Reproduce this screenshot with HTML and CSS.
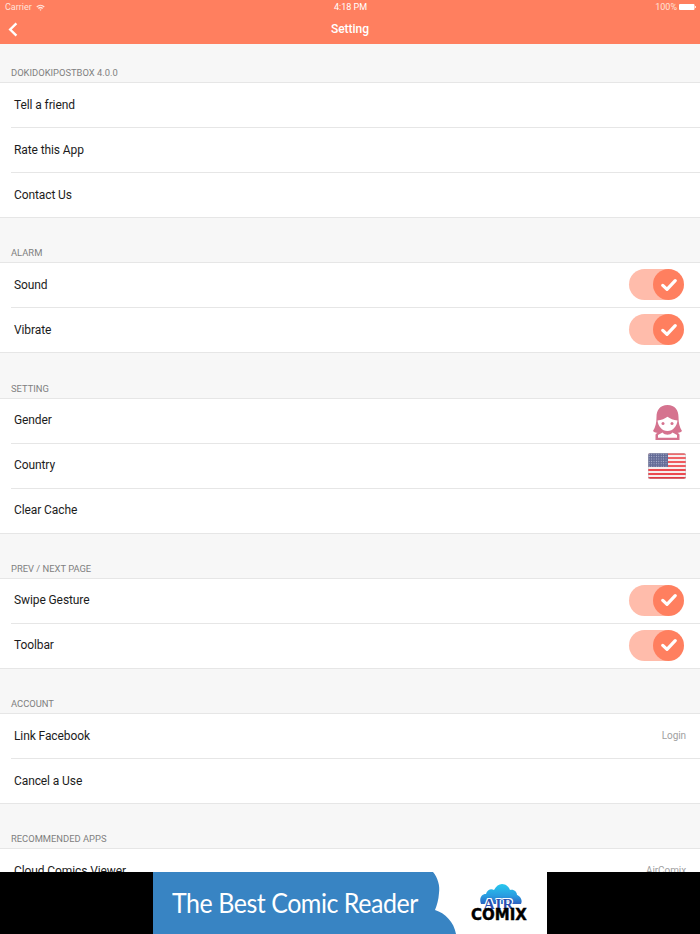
FILE: index.html
```html
<!DOCTYPE html>
<html>
<head>
   <meta charset="UTF-8">
   <title>Setting</title>
   <link rel="stylesheet" href="styles.css">
</head>
<body>
	<svg class="defs" width="0" height="0">
		<symbol id="check" viewBox="0 0 16 14">
			<path d="M1.800 7.400 L6 11.400 L14.200 2.600" fill="none" stroke="#fff" stroke-width="3.200" stroke-linecap="round" stroke-linejoin="round"/>
		</symbol>
	</svg>

	<div class="screen">
		<div class="topbar">
			<div class="status">
				<div class="status_left">
					Carrier
					<svg class="wifi" width="9" height="7" viewBox="0 0 11 8">
						<path d="M0.400 2.700 A7.400 7.400 0 0 1 10.600 2.700 L9.500 3.900 A5.800 5.800 0 0 0 1.500 3.900 Z M2.300 4.700 A4.600 4.600 0 0 1 8.700 4.700 L7.600 5.800 A3 3 0 0 0 3.400 5.800 Z M4.200 6.600 A1.900 1.900 0 0 1 6.800 6.600 L5.500 8 Z" fill="#ffe3da"/>
					</svg>
				</div>
				<div class="status_time">4:18 PM</div>
				<div class="status_right">
					100%
					<svg width="17" height="6" viewBox="0 0 17 6">
						<rect x="0" y="0" width="15.500" height="6" rx="1" fill="#fff"/>
						<rect x="15.900" y="2" width="1.100" height="2" fill="#ffe3da"/>
					</svg>
				</div>
			</div>
			<div class="nav">
				<svg class="back" width="10" height="15" viewBox="0 0 10 15">
					<path d="M8.400 1.400 L2.200 7.500 L8.400 13.600" fill="none" stroke="#fff" stroke-width="2.400"/>
				</svg>
				<div class="nav_title">Setting</div>
			</div>
		</div>

		<div class="content">
			<div class="sec_title">DOKIDOKIPOSTBOX 4.0.0</div>
			<div class="group">
				<div class="row"><span>Tell a friend</span></div>
				<div class="row"><span>Rate this App</span></div>
				<div class="row"><span>Contact Us</span></div>
			</div>

			<div class="sec_title">ALARM</div>
			<div class="group">
				<div class="row">
					<span>Sound</span>
					<div class="toggle"><div class="knob"><svg width="16" height="14"><use href="#check"/></svg></div></div>
				</div>
				<div class="row">
					<span>Vibrate</span>
					<div class="toggle"><div class="knob"><svg width="16" height="14"><use href="#check"/></svg></div></div>
				</div>
			</div>

			<div class="sec_title">SETTING</div>
			<div class="group">
				<div class="row">
					<span>Gender</span>
					<svg class="girl" width="29" height="35" viewBox="0 0 29 35">
						<path d="M14.500 0 C7 0 3.500 5 3.500 12 C3.500 18 2.500 22 0 26 C1.500 27.500 3 28 4.500 27.500 L2.500 29.500 L2.500 35 L26.500 35 L26.500 29.500 L24.500 27.500 C26 28 27.500 27.500 29 26 C26.500 22 25.500 18 25.500 12 C25.500 5 22 0 14.500 0 Z" fill="#d5738f"/>
						<path d="M4.500 15.500 C8.500 15 12 13.800 14.500 11.800 C17 13.800 20.500 15 24.500 15.500 C24 21 20 26 14.500 26 C9 26 5 21 4.500 15.500 Z" fill="#fff"/>
						<circle cx="10" cy="18.500" r="1.500" fill="#d5738f"/>
						<circle cx="19" cy="18.500" r="1.500" fill="#d5738f"/>
						<path d="M5 32.800 L5 30 L9.500 27.500 C12 30.500 17 30.500 19.500 27.500 L24 30 L24 32.800 Z" fill="#fff"/>
					</svg>
				</div>
				<div class="row">
					<span>Country</span>
					<svg class="flag" width="38" height="26" viewBox="0 0 38 26">
						<defs>
							<pattern id="stars" width="2.400" height="2.400" patternUnits="userSpaceOnUse">
								<circle cx="1.200" cy="1.200" r="0.550" fill="#b9bed6"/>
							</pattern>
							<clipPath id="flag_clip"><rect x="0" y="0" width="38" height="26" rx="2.500"/></clipPath>
						</defs>
						<g clip-path="url(#flag_clip)">
							<rect width="38" height="26" fill="#f6eeee"/>
							<rect y="0" width="38" height="2" fill="#ef6a6c"/>
							<rect y="4" width="38" height="2" fill="#ef6266"/>
							<rect y="8" width="38" height="2" fill="#ef5a5e"/>
							<rect y="12" width="38" height="2" fill="#ef5a5e"/>
							<rect y="16" width="38" height="2" fill="#ec4a50"/>
							<rect y="20" width="38" height="2" fill="#ec4a50"/>
							<rect y="24" width="38" height="2" fill="#e23a42"/>
							<rect width="20" height="14" fill="#636b96"/>
							<rect width="20" height="14" fill="url(#stars)"/>
						</g>
						<rect x="0.250" y="0.250" width="37.500" height="25.500" rx="2.500" fill="none" stroke="#b8b8c0" stroke-width="0.500"/>
					</svg>
				</div>
				<div class="row"><span>Clear Cache</span></div>
			</div>

			<div class="sec_title">PREV / NEXT PAGE</div>
			<div class="group">
				<div class="row">
					<span>Swipe Gesture</span>
					<div class="toggle"><div class="knob"><svg width="16" height="14"><use href="#check"/></svg></div></div>
				</div>
				<div class="row">
					<span>Toolbar</span>
					<div class="toggle"><div class="knob"><svg width="16" height="14"><use href="#check"/></svg></div></div>
				</div>
			</div>

			<div class="sec_title">ACCOUNT</div>
			<div class="group">
				<div class="row">
					<span>Link Facebook</span>
					<span class="row_value">Login</span>
				</div>
				<div class="row"><span>Cancel a Use</span></div>
			</div>

			<div class="sec_title">RECOMMENDED APPS</div>
			<div class="group">
				<div class="row">
					<span>Cloud Comics Viewer</span>
					<span class="row_value">AirComix</span>
				</div>
			</div>
		</div>

		<div class="ad">
			<div class="banner">
				<div class="banner_blue"><span class="banner_text">The Best Comic Reader</span></div>
				<svg class="banner_edge" width="24" height="62" viewBox="0 0 24 62">
					<path d="M0 0 C5 6 7 14 6 21 C5.500 28 4 33 2 38 C12 41 21 50 23 62 L0 62 Z" fill="#3884c3"/>
				</svg>
				<div class="logo">
					<svg class="cloud" width="42" height="20" viewBox="0 0 42 20">
						<defs>
							<linearGradient id="cloud_fill" x1="0" y1="0" x2="0" y2="1">
								<stop offset="0" stop-color="#27c8ee"/>
								<stop offset="0.600" stop-color="#2a9be0"/>
								<stop offset="1" stop-color="#2b62c0"/>
							</linearGradient>
						</defs>
						<path d="M1 20 C-1 15 1 10 6 10 C7 6 11 4 14 6 C16 2 19 0 22 0 C26 0 29 3 30 6 C34 5 37 8 37 11 C40 12 43 16 41 20 Z" fill="url(#cloud_fill)"/>
					</svg>
					<div class="logo_air">AIR</div>
					<div class="logo_comix">COMIX</div>
				</div>
			</div>
		</div>
	</div>
</body>
</html>
```

FILE: styles.css
```css
html, body{
	margin: 0;
	padding: 0;
}
body{
	font-family: "Roboto", "Liberation Sans", sans-serif;
	color: #1c1c1c;
}
.defs{
	display: block;
	height: 0;
}
.screen{
	width: 700px;
	height: 934px;
	display: flex;
	flex-direction: column;
	overflow: hidden;
	background: #f7f7f7;
}

/* top */
.topbar{
	height: 44px;
	flex: none;
	background: #ff7f5f;
	color: #fff;
}
.status{
	height: 14px;
	padding: 0 4px 0 5px;
	display: grid;
	grid-template-columns: 1fr auto 1fr;
	align-items: center;
	font-size: 9px;
	color: #ffe3da;
}
.status_left{
	display: flex;
	align-items: center;
	gap: 4px;
}
.status_time{
	color: #fff;
}
.status_right{
	display: flex;
	justify-content: flex-end;
	align-items: center;
	gap: 2px;
}
.nav{
	height: 30px;
	display: flex;
	align-items: center;
	justify-content: center;
	position: relative;
}
.back{
	position: absolute;
	left: 8px;
	top: 8px;
}
.nav_title{
	font-size: 12px;
	font-weight: 500;
}

/* list */
.content{
	flex: 1;
	min-height: 0;
	overflow: hidden;
}
.sec_title{
	height: 39px;
	padding: 0 11px 5px;
	box-sizing: border-box;
	display: flex;
	align-items: flex-end;
	font-size: 9.400px;
	color: #808080;
}
.group + .sec_title{
	height: 45.250px;
}
.group{
	background: #fff;
	border-top: 1px solid #e6e6e6;
	border-bottom: 1px solid #e6e6e6;
	margin-top: -1px;
}
.row{
	height: 45px;
	box-sizing: border-box;
	margin-left: 11px;
	padding: 0 14px 1px 3px;
	display: flex;
	align-items: center;
	justify-content: space-between;
	font-size: 12px;
	letter-spacing: -0.100px;
	border-bottom: 1px solid #e6e6e6;
}
.row:last-child{
	border-bottom: 0;
	height: 44px;
}
.row_value{
	font-size: 10px;
	color: #a0a0a0;
}
.girl{
	margin: 4px 4px 0 0;
}
.flag{
	margin-top: 1px;
}

/* toggle */
.toggle{
	width: 51px;
	height: 31px;
	margin-right: 6px;
	border-radius: 16px;
	background: #ffbcab;
	display: flex;
	justify-content: flex-end;
}
.knob{
	width: 31px;
	height: 31px;
	margin-right: -4px;
	flex: none;
	border-radius: 50%;
	background: #ff7f5f;
	display: flex;
	align-items: center;
	justify-content: center;
}

/* ad */
.ad{
	height: 62px;
	flex: none;
	background: #000;
	display: flex;
	justify-content: center;
}
.banner{
	width: 394px;
	background: #fff;
	display: flex;
}
.banner_blue{
	width: 280px;
	flex: none;
	box-sizing: border-box;
	padding: 13px 0 0 19px;
	background: #3884c3;
	color: #fff;
	font-family: "Lato", sans-serif;
	font-size: 27px;
	line-height: 36px;
	white-space: nowrap;
}
.banner_text{
	display: inline-block;
	letter-spacing: -0.500px;
	transform: scaleX(0.925);
	transform-origin: left center;
}
.banner_edge{
	flex: none;
}
.logo{
	margin-left: 13px;
	width: 58px;
	padding-top: 12px;
	position: relative;
	text-align: center;
}
.cloud{
	display: block;
	margin-left: 10px;
}
/* white outline cuts the word out of the cloud */
.logo_air{
	position: absolute;
	left: 0;
	right: 0;
	top: 27px;
	font-family: "Liberation Serif", serif;
	font-weight: bold;
	font-size: 15px;
	line-height: 10px;
	letter-spacing: 1px;
	color: #2b4fb0;
	text-shadow: 1px 0 #fff, -1px 0 #fff, 0 -1px #fff, 1px -1px #fff, -1px -1px #fff;
}
.logo_comix{
	margin-top: 5px;
	font-family: "DejaVu Sans", sans-serif;
	font-weight: bold;
	font-size: 15px;
	line-height: 13px;
	color: #000;
	-webkit-text-stroke: 0.400px #000;
	white-space: nowrap;
	position: relative;
}
```
